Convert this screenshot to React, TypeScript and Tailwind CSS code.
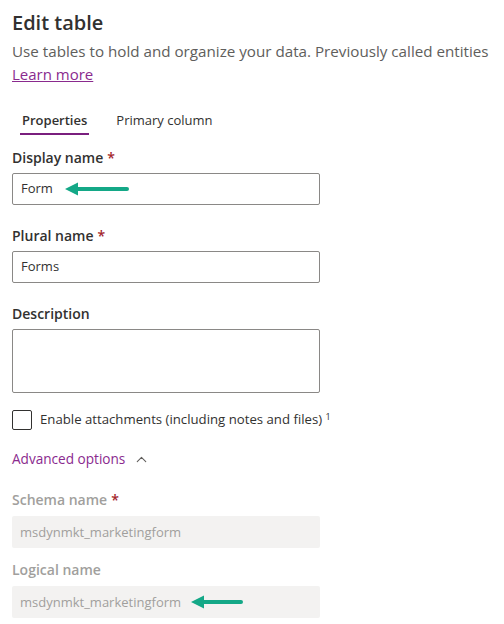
import { ChevronUp } from 'lucide-react';

function Arrow({ width }: { width: number }) {
  return (
    <svg width={width} height="14" viewBox={`0 0 ${width} 14`} className="shrink-0">
      <line x1="10" y1="7" x2={width - 2} y2="7" stroke="#14a887" strokeWidth="4" strokeLinecap="round" />
      <polygon points="0,7 13,0.5 13,13.5" fill="#14a887" />
    </svg>
  );
}

function Label({ text, required, disabled }: { text: string; required?: boolean; disabled?: boolean }) {
  return (
    <div className={`text-[14px] font-semibold leading-5 ${disabled ? 'text-[#a19f9d]' : 'text-[#323130]'}`}>
      {text}
      {required && <span className="ml-1 text-[#a4262c]">*</span>}
    </div>
  );
}

export default function App() {
  return (
    <div className="h-[624px] w-[504px] overflow-hidden bg-white px-3 pt-[9px] font-['Open_Sans',sans-serif] text-[#323130]">
      <h1 className="text-[20px] font-semibold leading-7 text-[#323130]">Edit table</h1>
      <p className="mt-[3px] whitespace-nowrap text-[15.2px] leading-[22px] text-[#605e5c]">
        Use tables to hold and organize your data. Previously called entities
      </p>
      <a className="text-[15px] leading-[22px] text-[#8a2a8e] underline">Learn more</a>

      <div className="mt-[25px] flex gap-[27px] pl-2">
        <div className="flex flex-col items-center">
          <span className="px-[2px] text-[13px] font-semibold leading-[18px] text-[#323130]">Properties</span>
          <div className="mt-[4px] h-[2px] w-full bg-[#7a1f7e]" />
        </div>
        <span className="text-[13px] leading-[18px] text-[#323130]">Primary column</span>
      </div>

      <div className="mt-[13px]">
        <Label text="Display name" required />
        <div className="mt-[5px] flex h-8 w-[308px] items-center gap-3 rounded-[2px] border border-[#8a8886] px-2">
          <span className="text-[13px]">Form</span>
          <Arrow width={64} />
        </div>
      </div>

      <div className="mt-[21px]">
        <Label text="Plural name" required />
        <div className="mt-[5px] flex h-8 w-[308px] items-center rounded-[2px] border border-[#8a8886] px-2">
          <span className="text-[13px]">Forms</span>
        </div>
      </div>

      <div className="mt-[21px]">
        <Label text="Description" />
        <div className="mt-[5px] h-16 w-[308px] rounded-[2px] border border-[#8a8886]" />
      </div>

      <div className="mt-[17px] flex items-center gap-2">
        <div className="size-5 rounded-[2px] border border-[#323130]" />
        <span className="text-[13.2px]">
          Enable attachments (including notes and files) <sup className="text-[9px]">1</sup>
        </span>
      </div>

      <div className="mt-[19px] flex items-center gap-2 text-[13.6px] text-[#8a2a8e]">
        Advanced options
        <ChevronUp size={17} strokeWidth={1.5} className="text-[#605e5c]" />
      </div>

      <div className="mt-[21px]">
        <Label text="Schema name" required disabled />
        <div className="mt-[6px] flex h-8 w-[308px] items-center rounded-[2px] bg-[#f3f2f1] px-2">
          <span className="text-[13px] text-[#a19f9d]">msdynmkt_marketingform</span>
        </div>
      </div>

      <div className="mt-[12px]">
        <Label text="Logical name" disabled />
        <div className="mt-[6px] flex h-8 w-[308px] items-center gap-[10px] rounded-[2px] bg-[#f3f2f1] px-2">
          <span className="text-[13px] text-[#a19f9d]">msdynmkt_marketingform</span>
          <Arrow width={52} />
        </div>
      </div>
    </div>
  );
}
